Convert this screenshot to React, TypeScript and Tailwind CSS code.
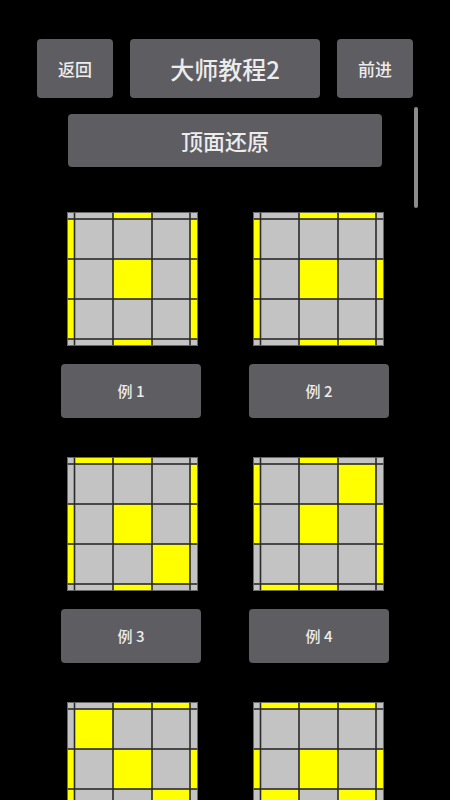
import React from "react";

type Pattern = {
  top: number[];
  left: number[];
  right: number[];
  bottom: number[];
  grid: number[][];
};

const patterns: Pattern[] = [
  { top: [0, 1, 0], left: [1, 1, 1], right: [1, 1, 1], bottom: [0, 1, 0], grid: [[0, 0, 0], [0, 1, 0], [0, 0, 0]] },
  { top: [0, 1, 1], left: [1, 1, 1], right: [0, 1, 0], bottom: [0, 1, 1], grid: [[0, 0, 0], [0, 1, 0], [0, 0, 0]] },
  { top: [1, 1, 0], left: [0, 1, 1], right: [1, 1, 0], bottom: [0, 1, 0], grid: [[0, 0, 0], [0, 1, 0], [0, 0, 1]] },
  { top: [0, 1, 0], left: [1, 1, 0], right: [0, 1, 1], bottom: [1, 1, 0], grid: [[0, 0, 1], [0, 1, 0], [0, 0, 0]] },
  { top: [0, 1, 1], left: [0, 1, 1], right: [0, 1, 0], bottom: [0, 1, 0], grid: [[1, 0, 0], [0, 1, 0], [0, 0, 1]] },
  { top: [1, 1, 1], left: [0, 1, 0], right: [0, 1, 0], bottom: [0, 1, 0], grid: [[0, 0, 0], [0, 1, 0], [1, 0, 1]] },
];

const XB = [0, 7.5, 46, 85, 123, 131];
const YB = [0, 7, 47, 87, 127, 134];
const GRAY = "#c3c3c3";
const YEL = "#ffff00";

function Diagram({ p }: { p: Pattern }) {
  const cells: React.ReactNode[] = [];
  for (let r = 0; r < 5; r++) {
    for (let c = 0; c < 5; c++) {
      let v = 0;
      const corner = (r === 0 || r === 4) && (c === 0 || c === 4);
      if (corner) v = 0;
      else if (r === 0) v = p.top[c - 1];
      else if (r === 4) v = p.bottom[c - 1];
      else if (c === 0) v = p.left[r - 1];
      else if (c === 4) v = p.right[r - 1];
      else v = p.grid[r - 1][c - 1];
      const x = XB[c] + 0.8;
      const y = YB[r] + 0.8;
      const w = XB[c + 1] - XB[c] - 1.6;
      const h = YB[r + 1] - YB[r] - 1.6;
      cells.push(
        <rect key={`${r}-${c}`} x={x} y={y} width={w} height={h} fill={v ? YEL : GRAY} />
      );
    }
  }
  return (
    <svg width="131" height="134" viewBox="0 0 131 134" className="block">
      <rect x="0" y="0" width="131" height="134" fill="#2a2a2a" />
      {cells}
      <rect x="0.25" y="0.25" width="130.5" height="133.5" fill="none" stroke="#8a8a8a" strokeWidth="0.5" />
    </svg>
  );
}

const font = { fontFamily: '"Noto Sans CJK SC", "Noto Sans", Roboto, sans-serif' };

export default function App() {
  return (
    <div className="relative h-[800px] w-[450px] overflow-hidden bg-black text-[#ececec]" style={font}>
      <div className="flex items-stretch gap-[17px] px-[37px] pt-[39px]">
        <div className="flex h-[59px] w-[76px] items-center justify-center rounded-[4px] bg-[#5e5d61] text-[17px] font-medium">
          返回
        </div>
        <div className="flex h-[59px] flex-1 items-center justify-center rounded-[4px] bg-[#5e5d61] text-[24px] font-medium">
          大师教程2
        </div>
        <div className="flex h-[59px] w-[76px] items-center justify-center rounded-[4px] bg-[#5e5d61] text-[17px] font-medium">
          前进
        </div>
      </div>

      <div className="flex justify-center pt-[16px]">
        <div className="flex h-[53px] w-[314px] items-center justify-center rounded-[4px] bg-[#5e5d61] text-[22px] font-medium">
          顶面还原
        </div>
      </div>

      <div className="grid grid-cols-2 px-[37px] pt-[45px]">
        {patterns.map((p, i) => (
          <div key={i} className="flex flex-col items-center pb-[39px]">
            <div className={i % 2 === 0 ? "ml-[3px]" : "-ml-[1px]"}>
              <Diagram p={p} />
            </div>
            {i < 4 && (
              <div className="mt-[18px] flex h-[54px] w-[140px] items-center justify-center rounded-[4px] bg-[#5e5d61] text-[15px] font-medium">
                例 {i + 1}
              </div>
            )}
          </div>
        ))}
      </div>

      <div className="absolute left-[414px] top-[107px] h-[101px] w-[4px] rounded-full bg-[#8c8c8c]" />
    </div>
  );
}
